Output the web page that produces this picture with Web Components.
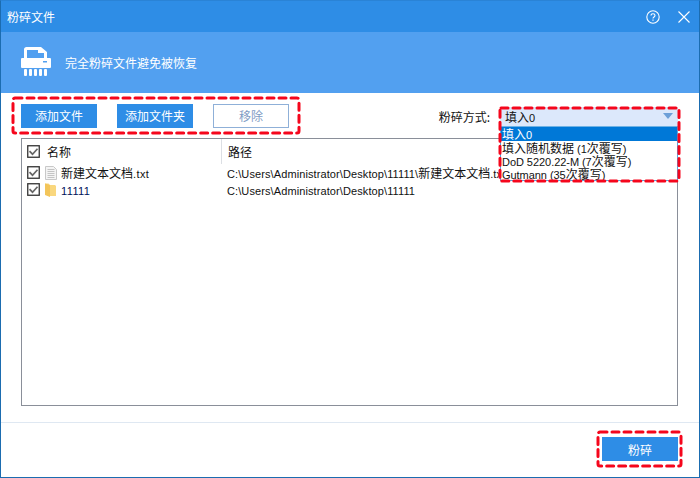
<!DOCTYPE html>
<html lang="zh">
<head>
<meta charset="utf-8">
<title>粉碎文件</title>
<style>
  html, body { margin: 0; padding: 0; background: #fff; }
  body { font-family: "Noto Sans CJK SC", "Liberation Sans", sans-serif; font-size: 12px; }
</style>
</head>
<body>
<shred-window>
  <title-bar slot="title">粉碎文件</title-bar>
  <shred-banner slot="banner">完全粉碎文件避免被恢复</shred-banner>
  <ui-button slot="tools">添加文件</ui-button>
  <ui-button slot="tools">添加文件夹</ui-button>
  <ui-button slot="tools" outline>移除</ui-button>
  <mode-select slot="mode" label="粉碎方式:"></mode-select>
  <file-table slot="table"></file-table>
  <ui-button slot="footer">粉碎</ui-button>
</shred-window>

<script>
// latin runs are a size smaller than the CJK around them
const mixed = s => s.replace(/[\x20-\x7e]+/g, m => `<span class="l">${m}</span>`);

class ShredWindow extends HTMLElement {
  constructor() {
    super();
    this.attachShadow({ mode: 'open' }).innerHTML = `
      <style>
        :host { display: block; position: relative; width: 700px; height: 478px; box-sizing: border-box;
                border: 1px solid #1b6cb0; border-top-color: #2a83d6; background: #fff; overflow: hidden; }
        .wrap { display: flex; flex-direction: column; height: 100%; }
        .tools { display: flex; align-items: center; justify-content: space-between; height: 45px; padding: 0 21px 0 20px; }
        .btns { display: flex; gap: 20px; }
        .table { flex: 1; display: flex; padding: 0 21px 16px 20px; min-height: 0; }
        .footer { display: flex; justify-content: flex-end; align-items: center; height: 55px;
                  padding: 0 21px 2px 0; box-sizing: border-box; border-top: 1px solid #dfe8f2; }
        .mark { position: absolute; pointer-events: none; }
        .mark rect { fill: none; stroke: #f5061c; stroke-width: 3; stroke-dasharray: 7 5; stroke-linecap: round; }
      </style>
      <div class="wrap">
        <slot name="title"></slot>
        <slot name="banner"></slot>
        <div class="tools">
          <div class="btns"><slot name="tools"></slot></div>
          <slot name="mode"></slot>
        </div>
        <div class="table"><slot name="table"></slot></div>
        <div class="footer"><slot name="footer"></slot></div>
      </div>
      <svg class="mark" style="left:10px;top:95px" width="290" height="40"><rect x="2" y="2" width="286" height="35" rx="2"/></svg>
      <svg class="mark" style="left:497px;top:105px" width="184" height="80"><rect x="2" y="2" width="179" height="73" rx="1"/></svg>
      <svg class="mark" style="left:595px;top:429px" width="88" height="40"><rect x="2" y="2" width="83" height="34" rx="2"/></svg>`;
  }
}

class TitleBar extends HTMLElement {
  constructor() {
    super();
    this.attachShadow({ mode: 'open' }).innerHTML = `
      <style>
        :host { display: flex; align-items: center; height: 31px; padding-left: 6px; background: #2e8de6;
                color: #fff; font-size: 12px; }
        .sp { flex: 1; }
        svg { display: block; }
        .help { margin-right: 18px; }
        .close { margin-right: 9px; }
      </style>
      <slot></slot>
      <span class="sp"></span>
      <svg class="help" width="14" height="14" viewBox="0 0 14 14" fill="none" stroke="#fff">
        <circle cx="7" cy="7" r="6.2" stroke-width="1.1"/>
        <path d="M5 5.6C5 4.4 5.9 3.7 7 3.7s2 .7 2 1.8c0 1.5-2 1.5-2 3" stroke-width="1.1"/>
        <path d="M7 9.6v1.2" stroke-width="1.2"/>
      </svg>
      <svg class="close" width="12" height="12" viewBox="0 0 12 12" stroke="#fff" stroke-width="1.1">
        <path d="M.5.5l11 11M11.500.5l-11 11"/>
      </svg>`;
  }
}

class ShredBanner extends HTMLElement {
  constructor() {
    super();
    this.attachShadow({ mode: 'open' }).innerHTML = `
      <style>
        :host { display: flex; align-items: center; height: 61px; padding-left: 20px; background: #52a0f0;
                color: #fff; font-size: 12px; }
        svg { display: block; margin: -2px 14px 0 0; }
      </style>
      <svg width="30" height="29" viewBox="0 0 30 29" fill="#fff">
        <path fill-rule="evenodd" d="M3 2.500C3 1 4 0 5.500 0H20l6 5v8H3zM6 3v9h17V6h-6V3z"/>
        <rect x="0" y="11" width="30" height="10" rx="1"/>
        <rect x="3" y="22" width="3" height="7" rx="1"/>
        <rect x="8" y="22" width="3" height="7" rx="1"/>
        <rect x="13" y="22" width="3" height="7" rx="1"/>
        <rect x="18" y="22" width="3" height="7" rx="1"/>
        <rect x="23" y="22" width="3" height="7" rx="1"/>
        <rect x="22" y="14" width="4" height="1.500" fill="#52a0f0"/>
      </svg>
      <slot></slot>`;
  }
}

class UiButton extends HTMLElement {
  constructor() {
    super();
    this.attachShadow({ mode: 'open' }).innerHTML = `
      <style>
        :host { display: inline-flex; align-items: center; justify-content: center; box-sizing: border-box;
                width: 76px; height: 24px; background: #2e8de6; color: #fff; font-size: 12px; }
        :host([outline]) { background: #fff; border: 1px solid #8fb0d8; color: #7f9cc4; }
      </style>
      <slot></slot>`;
  }
}

class ModeSelect extends HTMLElement {
  constructor() {
    super();
    const options = ['填入0', '填入随机数据 (1次覆写)', 'DoD 5220.22-M (7次覆写)', 'Gutmann (35次覆写)'];
    this.attachShadow({ mode: 'open' }).innerHTML = `
      <style>
        :host { display: flex; align-items: center; position: relative; margin-top: 2px; color: #111; font-size: 12px; }
        .label { margin-right: 10px; }
        .l { font: 11px "Liberation Sans", sans-serif; }
        .field { width: 178px; height: 20px; box-sizing: border-box; display: flex; align-items: center;
                 justify-content: space-between; padding: 0 5px; background: #dce8fb; border-bottom: 1px solid #6fb2e4; }
        .arrow { width: 0; height: 0; border: 5px solid transparent; border-top: 6px solid #6d9fd8; border-bottom: 0; }
        .list { position: absolute; right: 0; top: 20px; width: 178px; box-sizing: border-box; height: 54px;
                background: #fff; border: 1px solid #5aa7e0; border-top: 0; }
        .opt { height: 13.300px; line-height: 13.300px; padding-left: 1px; white-space: nowrap; }
        .opt .l { letter-spacing: -.05px; }
        .opt.on { background: #0078d7; color: #fff; height: 14px; }
      </style>
      <span class="label">${this.getAttribute('label')}</span>
      <div class="field"><span>${mixed(options[0])}</span><span class="arrow"></span></div>
      <div class="list">${options.map((o, i) => `<div class="opt${i === 0 ? ' on' : ''}">${mixed(o)}</div>`).join('')}</div>`;
  }
}

class FileCheck extends HTMLElement {
  constructor() {
    super();
    this.attachShadow({ mode: 'open' }).innerHTML = `
      <style>
        :host { display: block; width: 13px; height: 13px; flex: none; }
        svg { display: block; }
      </style>
      <svg width="13" height="13" viewBox="0 0 13 13" fill="none">
        <rect x=".75" y=".75" width="11.500" height="11.500" fill="#fff" stroke="#333" stroke-width="1.300"/>
        <path d="M2.500 6.200l3 3 5-5.500" stroke="#666" stroke-width="1.700"/>
      </svg>`;
  }
}

class FileTable extends HTMLElement {
  constructor() {
    super();
    const doc = `<svg width="12" height="14" viewBox="0 0 12 14"><path d="M.5.5h8l3 3v10H.5z" fill="#f4f4f4" stroke="#c8c8c8"/><path d="M2.500 3.500h7M2.500 5.500h7M2.500 7.500h7M2.500 9.500h7M2.500 11.500h7" stroke="#c4c4c4"/></svg>`;
    const folder = `<svg width="11" height="14" viewBox="0 0 11 14"><path d="M0 .5h3.500L5 2h5l1 1v10H5z" fill="#f9d77e"/><path d="M0 .5l5 1.500V14L0 12z" fill="#f3c55a"/></svg>`;
    this.attachShadow({ mode: 'open' }).innerHTML = `
      <style>
        :host { display: block; flex: 1; box-sizing: border-box; border: 1px solid #8a8f99; background: #fff;
                color: #111; font-size: 12px; overflow: hidden; }
        .row { display: flex; align-items: center; height: 17px; }
        .row.head { height: 25px; }
        .name { display: flex; align-items: center; width: 199px; height: 100%; padding-left: 5px; box-sizing: border-box; flex: none; }
        .head .name { border-right: 1px solid #dcdfe4; width: 200px; }
        .name .l { letter-spacing: .4px; }
        .path { padding-left: 6px; white-space: nowrap; }
        .path .l { letter-spacing: .1px; }
        .l { font: 11px "Liberation Sans", sans-serif; }
        .lbl { margin-left: 6px; }
        .ico { display: block; margin-left: 5px; height: 14px; }
        .ico svg { display: block; }
        .ico + .lbl { margin-left: 4px; }
      </style>
      <div class="row head">
        <div class="name"><file-check></file-check><span class="lbl" style="margin-left:7px">名称</span></div>
        <div class="path">路径</div>
      </div>
      <div class="row">
        <div class="name"><file-check></file-check><span class="ico">${doc}</span><span class="lbl">${mixed('新建文本文档.txt')}</span></div>
        <div class="path">${mixed('C:\\Users\\Administrator\\Desktop\\11111\\新建文本文档.txt')}</div>
      </div>
      <div class="row">
        <div class="name"><file-check></file-check><span class="ico">${folder}</span><span class="lbl" style="margin-left:5px;color:#00105a">${mixed('11111')}</span></div>
        <div class="path">${mixed('C:\\Users\\Administrator\\Desktop\\11111')}</div>
      </div>`;
  }
}

customElements.define('shred-window', ShredWindow);
customElements.define('title-bar', TitleBar);
customElements.define('shred-banner', ShredBanner);
customElements.define('ui-button', UiButton);
customElements.define('mode-select', ModeSelect);
customElements.define('file-check', FileCheck);
customElements.define('file-table', FileTable);
</script>
</body>
</html>
